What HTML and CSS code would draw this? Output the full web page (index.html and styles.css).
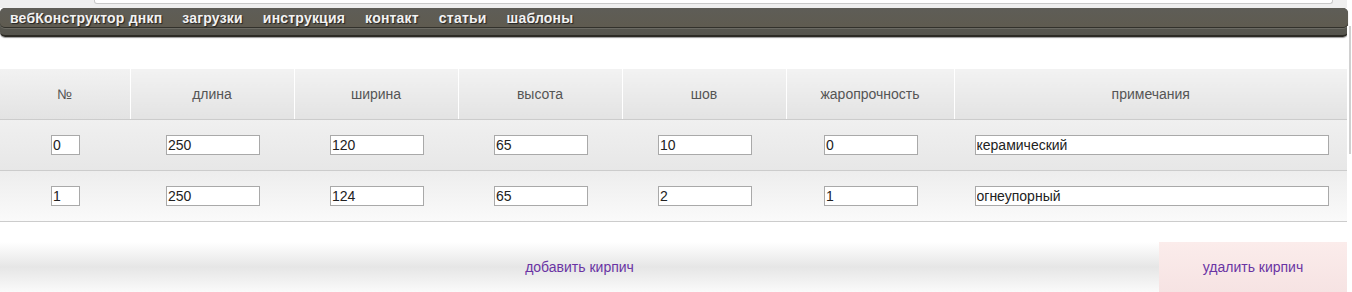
FILE: index.html
```html
<!DOCTYPE html>
<html lang="ru">
<head>
    <meta charset="UTF-8">
    <title>вебКонструктор днкп</title>
    <link rel="stylesheet" href="styles.css">
</head>
<body>
    <div class="page">
        <div class="top-strip">
            <div class="search-box"></div>
        </div>

        <!-- меню -->
        <div class="nav">
            <div class="nav-links">
                <a href="#">вебКонструктор днкп</a>
                <a href="#">загрузки</a>
                <a href="#">инструкция</a>
                <a href="#">контакт</a>
                <a href="#">статьи</a>
                <a href="#">шаблоны</a>
            </div>
        </div>

        <!-- таблица кирпичей -->
        <table class="bricks">
            <thead>
                <tr>
                    <th class="c-num">№</th>
                    <th class="c-val">длина</th>
                    <th class="c-val">ширина</th>
                    <th class="c-val">высота</th>
                    <th class="c-val">шов</th>
                    <th class="c-heat">жаропрочность</th>
                    <th class="c-note">примечания</th>
                </tr>
            </thead>
            <tbody>
                <tr class="row-a">
                    <td><input class="in-num" type="text" value="0"></td>
                    <td><input class="in-val" type="text" value="250"></td>
                    <td><input class="in-val" type="text" value="120"></td>
                    <td><input class="in-val" type="text" value="65"></td>
                    <td><input class="in-val" type="text" value="10"></td>
                    <td><input class="in-val" type="text" value="0"></td>
                    <td><input class="in-note" type="text" value="керамический"></td>
                </tr>
                <tr class="row-b">
                    <td><input class="in-num" type="text" value="1"></td>
                    <td><input class="in-val" type="text" value="250"></td>
                    <td><input class="in-val" type="text" value="124"></td>
                    <td><input class="in-val" type="text" value="65"></td>
                    <td><input class="in-val" type="text" value="2"></td>
                    <td><input class="in-val" type="text" value="1"></td>
                    <td><input class="in-note" type="text" value="огнеупорный"></td>
                </tr>
            </tbody>
        </table>

        <div class="actions">
            <a class="add-link" href="#">добавить кирпич</a>
            <a class="del-link" href="#">удалить кирпич</a>
        </div>
    </div>
    <div class="scroll-track"><div class="scroll-thumb"></div></div>
</body>
</html>
```

FILE: styles.css
```css
* {
    margin: 0;
    padding: 0;
    box-sizing: border-box;
}

body {
    font-family: 'Liberation Sans', Arial, sans-serif;
    background: #fff;
    width: 1352px;
    height: 292px;
    overflow: hidden;
}

.page {
    width: 1347px;
}

.top-strip {
    height: 8px;
    background: #efefef;
    padding-left: 94px;
    padding-right: 14px;
}

.search-box {
    height: 4px;
    background: #fff;
    border: 1px solid #c9c9c9;
    border-top: none;
    border-radius: 0 0 3px 3px;
}

.nav {
    width: 1348px;
    background: linear-gradient(#5b5b58, #55544c);
    border-radius: 5px;
    padding-bottom: 7px;
    border-bottom: 2px solid #2c2a24;
    box-shadow: 0 1px 1px rgba(0, 0, 0, 0.4);
}

.nav-links {
    height: 20px;
    display: flex;
    gap: 20px;
    padding-left: 10px;
    background: linear-gradient(#5e5d57, #5f5b50);
    border-bottom: 1px solid #32312b;
    border-radius: 5px;
    box-shadow: 0 1px 0 #6b6a63;
}

.nav-links a {
    color: #f2f2f2;
    font-weight: bold;
    font-size: 14px;
    letter-spacing: 0.2px;
    line-height: 21px;
    text-decoration: none;
    text-shadow: 1px 1px 1px #222;
}

.bricks {
    margin-top: 32px;
    width: 1347px;
    border-collapse: collapse;
    table-layout: fixed;
}

.c-num { width: 130px; }
.c-val { width: 164px; }
.c-heat { width: 168px; }
.c-note { width: 393px; }

.bricks th {
    height: 50px;
    background: linear-gradient(#f2f2f2, #e3e3e3);
    border-left: 1px solid #fff;
    border-bottom: 1px solid #cccccc;
    color: #555;
    font-weight: normal;
    font-size: 14px;
}

.bricks th:first-child {
    border-left: none;
}

.bricks td {
    height: 51px;
    text-align: center;
    border-bottom: 1px solid #cccccc;
}

.row-a {
    background: linear-gradient(#f0f0f0, #e7e7e7);
}

.row-b {
    background: linear-gradient(#ededed, #fafafa);
}

.bricks input {
    height: 20px;
    border: 1px solid #a9a9a9;
    background: #fff;
    font-family: 'Liberation Sans', Arial, sans-serif;
    font-size: 14px;
    color: #222;
    padding: 0 2px 0 1px;
    vertical-align: middle;
}

.in-num { width: 29px; margin-left: 1px; }
.in-val { width: 94px; margin-left: 2px; }
.in-note { width: 354px; margin-left: 2px; }

.actions {
    margin-top: 20px;
    height: 50px;
    display: flex;
    background: linear-gradient(#ffffff, #e6e6e6 50%, #fafafa);
}

.actions a {
    display: flex;
    align-items: center;
    justify-content: center;
    color: #6a34a4;
    font-size: 14px;
    text-decoration: none;
}

.add-link {
    flex: 1;
}

.del-link {
    width: 188px;
    background: linear-gradient(#fbeceb, #f6e3e3);
}

.scroll-track {
    position: absolute;
    top: 26px;
    left: 1347px;
    width: 5px;
    height: 266px;
    background: #fff;
}

.scroll-thumb {
    margin-left: 2px;
    width: 2px;
    height: 128px;
    background: #d0d0d0;
}
```
